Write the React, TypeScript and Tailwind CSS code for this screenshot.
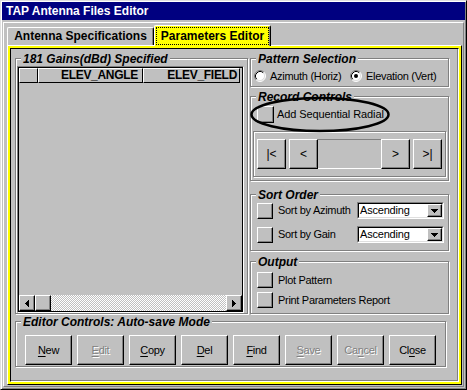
import React from "react";

const raised =
  "border border-t-white border-l-white border-r-black border-b-black shadow-[inset_-1px_-1px_0_#808080]";
const etched = "border border-[#808080] shadow-[inset_1px_1px_0_#fff,1px_1px_0_#fff]";

function Group({
  title,
  className = "",
  children,
}: {
  title: string;
  className?: string;
  children?: React.ReactNode;
}) {
  return (
    <div className={`relative ${etched} ${className}`}>
      <span className="absolute -top-[6px] left-[5px] px-[2px] bg-[#c0c0c0] text-[12px] leading-[13px] font-bold italic whitespace-nowrap">
        {title}
      </span>
      {children}
    </div>
  );
}

function Radio({ checked }: { checked?: boolean }) {
  return (
    <svg width="12" height="12" viewBox="0 0 12 12" className="shrink-0">
      <circle cx="6" cy="6" r="5" fill="#fff" />
      <path d="M2.11 9.89A5.5 5.5 0 0 1 9.89 2.11" fill="none" stroke="#808080" />
      <path d="M9.89 2.11A5.5 5.5 0 0 1 2.11 9.89" fill="none" stroke="#fff" />
      <path d="M2.82 9.18A4.5 4.5 0 0 1 9.18 2.82" fill="none" stroke="#000" />
      <path d="M9.18 2.82A4.5 4.5 0 0 1 2.82 9.18" fill="none" stroke="#dfdfdf" />
      {checked && <circle cx="6" cy="6" r="2" fill="#000" />}
    </svg>
  );
}

function ArrowLeft() {
  return (
    <svg width="4" height="7" viewBox="0 0 4 7" shapeRendering="crispEdges">
      <path d="M0 3h1v1H0z M1 2h1v3H1z M2 1h1v5H2z M3 0h1v7H3z" fill="#000" />
    </svg>
  );
}
function ArrowRight() {
  return (
    <svg width="4" height="7" viewBox="0 0 4 7" shapeRendering="crispEdges">
      <path d="M3 3h1v1H3z M2 2h1v3H2z M1 1h1v5H1z M0 0h1v7H0z" fill="#000" />
    </svg>
  );
}
function ArrowDown() {
  return (
    <svg width="7" height="4" viewBox="0 0 7 4" shapeRendering="crispEdges">
      <path d="M0 0h7v1H0z M1 1h5v1H1z M2 2h3v1H2z M3 3h1v1H3z" fill="#000" />
    </svg>
  );
}

function SquareRow({ label, size = 16 }: { label: string; size?: number }) {
  return (
    <div className="flex items-center">
      <div className={`${size === 17 ? "w-[17px] h-[17px]" : "w-[16px] h-[16px]"} ${raised} shrink-0`} />
      <span className="ml-[5px] text-[11px] leading-[13px] tracking-[-0.3px] whitespace-nowrap">{label}</span>
    </div>
  );
}

function Dropdown() {
  return (
    <div className="ml-auto w-[87px] h-[17px] border border-t-[#808080] border-l-[#808080] border-r-white border-b-white">
      <div className="h-full border border-t-black border-l-black border-r-[#dfdfdf] border-b-[#dfdfdf] bg-white flex items-center">
        <span className="flex-1 pl-[1px] text-[11px] leading-[13px] tracking-[-0.2px]">Ascending</span>
        <div className={`w-[15px] h-full ${raised} bg-[#c0c0c0] flex items-center justify-center`}>
          <ArrowDown />
        </div>
      </div>
    </div>
  );
}

function Btn({
  pre,
  acc,
  post,
  disabled,
}: {
  pre?: string;
  acc: string;
  post?: string;
  disabled?: boolean;
}) {
  return (
    <div
      className={`w-[47px] h-[30px] ${raised} flex items-center justify-center text-[11px] leading-[13px] tracking-[-0.3px] ${
        disabled ? "text-[#808080] [text-shadow:1px_1px_0_#fff]" : "text-black"
      }`}
    >
      <span>
        {pre}
        <span className="underline underline-offset-[2px]">{acc}</span>
        {post}
      </span>
    </div>
  );
}

function NavBtn({ children }: { children: React.ReactNode }) {
  return (
    <div className={`w-[29px] h-[30px] ${raised} flex items-center justify-center text-[12px] leading-[13px]`}>
      {children}
    </div>
  );
}

export default function App() {
  return (
    <div className="relative w-[467px] h-[390px] bg-[#c0c0c0] border border-t-[#dfdfdf] border-l-[#dfdfdf] border-r-black border-b-black shadow-[inset_1px_1px_0_#fff,inset_-1px_-1px_0_#808080] p-[1px] flex flex-col font-['Liberation_Sans',Arial,sans-serif] text-black select-none overflow-hidden">
      <div className="h-[18px] shrink-0 bg-[#000080] text-white text-[12px] font-bold leading-[18px] pl-[4px] whitespace-nowrap">
        TAP Antenna Files Editor
      </div>

      <div className="flex-1 mt-[2px] mx-[1px] mb-[1px] border border-t-white border-l-white border-r-[#808080] border-b-[#808080] pt-[2px] pl-[3px] pr-[1px] pb-[1px] flex flex-col">
        {/* tab strip */}
        <div className="flex items-end h-[20px] shrink-0">
          <div className="w-[147px] h-[18px] border-x border-t border-t-white border-l-white border-r-black shadow-[inset_-1px_0_0_#808080] rounded-t-[2px] flex items-center justify-center text-[12px] leading-[13px] font-bold whitespace-nowrap">
            Antenna Specifications
          </div>
          <div className="relative z-10 w-[117px] h-[21px] -mb-[1px] bg-[#ffff00] border-x border-t border-t-white border-l-white border-r-black shadow-[inset_-1px_0_0_#808080] rounded-t-[2px] p-[1px]">
            <div className="h-full border border-dotted border-black flex items-center justify-center text-[12px] leading-[13px] font-bold whitespace-nowrap">
              Parameters Editor
            </div>
          </div>
        </div>

        {/* page */}
        <div className="flex-1 border border-t-white border-l-white border-r-black border-b-black">
          <div className="h-full border-2 border-[#ffff00]">
            <div className="h-full border border-t-black border-l-black border-r-white border-b-white shadow-[inset_-1px_-1px_0_#808080] pt-[9px] pl-[4px] flex flex-col">
              <div className="flex">
                {/* left group */}
                <Group title="181 Gains(dBd) Specified" className="w-[233px] h-[256px]">
                  <div className="ml-[1px] mt-[7px] w-[227px] h-[247px] border border-t-[#808080] border-l-[#808080] border-r-white border-b-white">
                    <div className="h-full border border-black flex flex-col">
                      <div className="flex h-[15px] text-[12px] leading-[13px] font-bold tracking-[-0.3px]">
                        <div className="w-[19px] border border-t-white border-l-white border-r-black border-b-black" />
                        <div className="w-[105px] border border-t-white border-l-white border-r-black border-b-black text-right pr-[4px]">
                          ELEV_ANGLE
                        </div>
                        <div className="w-[97px] border border-t-white border-l-white border-r-black border-b-black text-right pr-[2px]">
                          ELEV_FIELD
                        </div>
                      </div>
                      <div className="flex-1" />
                      <div className="h-[16px] flex">
                        <div className={`w-[16px] h-[16px] ${raised} flex items-center justify-center`}>
                          <ArrowLeft />
                        </div>
                        <div className={`w-[16px] h-[16px] ${raised}`} />
                        <div className="flex-1 [background-image:repeating-conic-gradient(#c0c0c0_0%_25%,#fff_0%_50%)] [background-size:2px_2px]" />
                        <div className={`w-[16px] h-[16px] ${raised} flex items-center justify-center`}>
                          <ArrowRight />
                        </div>
                      </div>
                    </div>
                  </div>
                </Group>

                {/* right column */}
                <div className="ml-[2px] w-[199px] flex flex-col">
                  <Group title="Pattern Selection" className="h-[29px]">
                    <div className="flex items-center mt-[11px] pl-[3px] h-[12px] text-[11px] leading-[13px] tracking-[-0.3px]">
                      <div className="w-[96px] flex items-center gap-[4px]">
                        <Radio />
                        <span className="whitespace-nowrap">Azimuth (Horiz)</span>
                      </div>
                      <div className="flex items-center gap-[4px]">
                        <Radio checked />
                        <span className="whitespace-nowrap">Elevation (Vert)</span>
                      </div>
                    </div>
                  </Group>

                  <Group title="Record Controls" className="mt-[9px] h-[85px]">
                    <div className="flex items-center mt-[9px] ml-[6px]">
                      <div className={`w-[17px] h-[17px] ${raised} shrink-0`} />
                      <span className="ml-[3px] text-[11px] leading-[13px] tracking-[-0.1px] whitespace-nowrap">
                        Add Sequential Radial
                      </span>
                    </div>
                    <div className={`ml-[2px] mt-[8px] w-[193px] h-[46px] ${etched} pl-[3px] pt-[7px] flex`}>
                      <NavBtn>|&lt;</NavBtn>
                      <div className="ml-[3px] flex">
                        <NavBtn>&lt;</NavBtn>
                        <div className="w-[63px] h-[30px] border-t border-b border-t-[#808080] border-b-white" />
                        <NavBtn>&gt;</NavBtn>
                      </div>
                      <div className="ml-[3px]">
                        <NavBtn>&gt;|</NavBtn>
                      </div>
                    </div>
                  </Group>

                  <Group title="Sort Order" className="mt-[13px] h-[57px]">
                    <div className="mt-[7px] flex flex-col gap-[7px] pl-[6px] pr-[4px]">
                      <div className="flex items-center h-[17px]">
                        <SquareRow label="Sort by Azimuth" />
                        <Dropdown />
                      </div>
                      <div className="flex items-center h-[17px]">
                        <SquareRow label="Sort by Gain" />
                        <Dropdown />
                      </div>
                    </div>
                  </Group>

                  <Group title="Output" className="mt-[10px] h-[53px]">
                    <div className="mt-[10px] flex flex-col gap-[4px] pl-[6px]">
                      <SquareRow label="Plot Pattern" />
                      <SquareRow label="Print Parameters Report" />
                    </div>
                  </Group>
                </div>
              </div>

              {/* editor controls */}
              <Group title="Editor Controls: Auto-save Mode" className="mt-[7px] w-[431px] h-[46px]">
                <div className="flex gap-[5px] mt-[13px] ml-[9px]">
                  <Btn acc="N" post="ew" />
                  <Btn acc="E" post="dit" disabled />
                  <Btn acc="C" post="opy" />
                  <Btn acc="D" post="el" />
                  <Btn acc="F" post="ind" />
                  <Btn acc="S" post="ave" disabled />
                  <Btn pre="Ca" acc="n" post="cel" disabled />
                  <Btn pre="Cl" acc="o" post="se" />
                </div>
              </Group>
            </div>
          </div>
        </div>
      </div>

      {/* hand-drawn annotation ellipse */}
      <svg
        className="absolute left-[247px] top-[93px] pointer-events-none"
        width="144"
        height="42"
        viewBox="0 0 144 42"
      >
        <ellipse cx="72" cy="20.5" rx="68.5" ry="16.5" fill="none" stroke="#000" strokeWidth="2.5" />
      </svg>
    </div>
  );
}
